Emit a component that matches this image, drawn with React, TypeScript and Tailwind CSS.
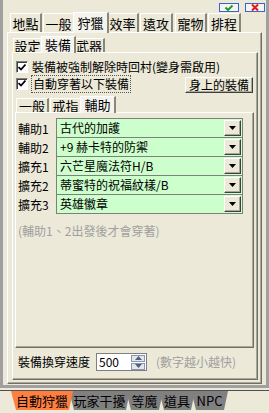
import React from 'react';

const font = "font-['Noto_Sans_CJK_TC','Noto_Sans_CJK_SC',sans-serif]";

const Tab = ({ label, active, w }: { label: string; active?: boolean; w: string }) => (
  <div
    className={`flex items-center justify-center border-t border-l border-white border-r-2 border-r-[#8a877a] ${w} ${
      active ? 'h-[21px] -mb-px -mx-[2px] relative z-10 bg-[#f4f3ee] pb-[2px]' : 'h-[19px] bg-[#ece9d8]'
    }`}
  >
    {label}
  </div>
);

const SubTab = ({ label, active, w }: { label: string; active?: boolean; w: string }) => (
  <div
    className={`flex items-center justify-center border-t border-l border-white border-r-2 border-r-[#8a877a] ${w} ${
      active ? 'h-[17px] -mb-px -mx-[2px] relative z-10 bg-[#f4f3ee] pb-[2px]' : 'h-[14px] bg-[#ece9d8]'
    }`}
  >
    {label}
  </div>
);

const Check = () => (
  <div className="w-[12px] h-[12px] shrink-0 bg-white border border-t-[#808080] border-l-[#808080] border-r-white border-b-white shadow-[inset_1px_1px_0_#404040] flex items-center justify-center">
    <svg width="8" height="7" viewBox="0 0 8 7">
      <path d="M0.5 3 L3 5.5 L7.5 0.5" stroke="#000" strokeWidth="1.7" fill="none" />
    </svg>
  </div>
);

const Combo = ({ text }: { text: string }) => (
  <div className="flex w-[187px] h-[20px] border border-[#7f7f7f] bg-[#ccffcc]">
    <div className="flex-1 flex items-center pl-[3px] whitespace-nowrap">{text}</div>
    <div className="w-[17px] m-[1px] bg-[#ece9d8] border border-t-white border-l-white border-r-[#404040] border-b-[#404040] shadow-[inset_-1px_-1px_0_#aca899] flex items-center justify-center">
      <svg width="7" height="4" viewBox="0 0 7 4">
        <path d="M0 0 H7 L3.5 4 Z" fill="#000" />
      </svg>
    </div>
  </div>
);

const rows = [
  ['輔助1', '古代的加護'],
  ['輔助2', '+9 赫卡特的防禦'],
  ['擴充1', '六芒星魔法符H/B'],
  ['擴充2', '蒂蜜特的祝福紋樣/B'],
  ['擴充3', '英雄徽章'],
];

const bottomTabs = [
  { label: '自動狩獵', w: 'w-[62px]', active: true },
  { label: '玩家干擾', w: 'w-[61px]' },
  { label: '等魔', w: 'w-[37px]' },
  { label: '道具', w: 'w-[36px]' },
  { label: 'NPC', w: 'w-[37px]' },
];

export default function App() {
  return (
    <div className={`w-[269px] h-[413px] bg-[#ece9d8] overflow-hidden text-[12px] leading-none text-black ${font}`}>
      <div className="h-[388px] border-x-[3px] border-b-[3px] border-[#a0a0a0] flex flex-col">
        {/* title buttons */}
        <div className="h-[11px] flex justify-end gap-[6px] pr-[1px] pt-[3px]">
          <div className="w-[20px] h-[9px] border border-[#3c64c8] bg-[#f4f4f4] flex items-center justify-center">
            <svg width="8" height="6" viewBox="0 0 8 6">
              <path d="M0.5 2.5 L3 5 L7.5 0.5" stroke="#1e9e1e" strokeWidth="2" fill="none" />
            </svg>
          </div>
          <div className="w-[20px] h-[9px] border border-[#3c64c8] bg-[#f4f4f4] flex items-center justify-center">
            <svg width="8" height="7" viewBox="0 0 8 7">
              <path d="M1 0.5 L7 6.5 M7 0.5 L1 6.5" stroke="#e01818" strokeWidth="2" fill="none" />
            </svg>
          </div>
        </div>
        {/* main tabs */}
        <div className="h-[21px] flex items-end pl-[7px] text-[13px]">
          <Tab label="地點" w="w-[32px] mr-[1px]" />
          <Tab label="一般" w="w-[32px]" />
          <Tab label="狩獵" w="w-[36px]" active />
          <Tab label="效率" w="w-[32px] mr-[1px]" />
          <Tab label="遠攻" w="w-[33px] mr-[2px]" />
          <Tab label="寵物" w="w-[32px] mr-[1px]" />
          <Tab label="排程" w="w-[33px]" />
        </div>
        {/* main panel */}
        <div className="flex-1 mx-[4px] mb-[1px] border-t border-l border-white border-r border-b border-r-[#716f64] border-b-[#716f64] shadow-[inset_-1px_-1px_0_#aca899] flex flex-col pl-[4px] pr-[3px] pb-[3px]">
          <div className="h-[19px] flex items-end pl-[1px] text-[13px]">
            <SubTab label="設定" w="w-[30px]" />
            <SubTab label="裝備" w="w-[35px]" active />
            <SubTab label="武器" w="w-[31px]" />
          </div>
          {/* sub panel */}
          <div className="flex-1 border-t border-l border-white border-r border-b border-r-[#716f64] border-b-[#716f64] shadow-[inset_-1px_-1px_0_#aca899] flex flex-col pl-[2px] pr-[3px]">
            <div className="mt-[7px] h-[14px] flex items-center gap-[4px] pl-[1px]">
              <Check />
              <span className="whitespace-nowrap">裝備被強制解除時回村(變身需啟用)</span>
            </div>
            <div className="h-[17px] flex items-center pl-[1px] mt-[1px]">
              <Check />
              <span className="ml-[3px] px-[1px] py-[2px] border border-dotted border-[#555] whitespace-nowrap">自動穿著以下裝備</span>
              <div className="ml-auto mt-[3px] mr-[1px] w-[68px] h-[16px] border border-t-white border-l-white border-r-[#404040] border-b-[#404040] shadow-[inset_-1px_-1px_0_#aca899] flex items-center justify-center">
                身上的裝備
              </div>
            </div>
            {/* sub-sub tabs */}
            <div className="h-[19px] mt-[1px] flex items-end pl-[1px] text-[13px]">
              <SubTab label="一般" w="w-[33px] mr-[1px]" />
              <SubTab label="戒指" w="w-[32px]" />
              <SubTab label="輔助" w="w-[36px]" active />
            </div>
            <div className="h-[236px] border-t border-l border-white border-r border-b border-r-[#716f64] border-b-[#716f64] shadow-[inset_-1px_-1px_0_#aca899] pl-[2px] pt-[5px]">
              <div className="flex flex-col">
                {rows.map(([label, val]) => (
                  <div key={label} className="flex items-center h-[20px] -mt-px first:mt-0">
                    <div className="w-[38px] pt-[2px] whitespace-nowrap">{label}</div>
                    <Combo text={val} />
                  </div>
                ))}
              </div>
              <div className="mt-[11px] text-[#a0a0a0] whitespace-nowrap">(輔助1、2出發後才會穿著)</div>
            </div>
            {/* speed row */}
            <div className="mt-[5px] flex items-center pl-[3px]">
              <span className="w-[78px] whitespace-nowrap">裝備換穿速度</span>
              <div className="w-[51px] h-[18px] bg-white border border-[#7f7f7f] flex items-center">
                <span className="flex-1 pl-[2px]">500</span>
                <div className="w-[14px] h-[15px] mr-[1px] flex flex-col gap-px">
                  <div className="flex-1 bg-[#e6e6e6] border border-[#8896b8] flex items-center justify-center">
                    <svg width="7" height="4" viewBox="0 0 7 4"><path d="M0 4 H7 L3.5 0 Z" fill="#4d6185" /></svg>
                  </div>
                  <div className="flex-1 bg-[#e6e6e6] border border-[#8896b8] flex items-center justify-center">
                    <svg width="7" height="4" viewBox="0 0 7 4"><path d="M0 0 H7 L3.5 4 Z" fill="#4d6185" /></svg>
                  </div>
                </div>
              </div>
              <span className="ml-[9px] text-[#a0a0a0] whitespace-nowrap">(數字越小越快)</span>
            </div>
          </div>
        </div>
      </div>
      {/* bottom tabs */}
      <div className="h-[21px] mt-[2px] flex pl-[11px] border-t border-[#505050]">
        {bottomTabs.map((t) => (
          <div
            key={t.label}
            className={`${t.w} h-[19px] -mr-[4px] flex items-center justify-center text-[13px] ${
              t.active ? 'bg-[#ff7f40] relative z-10' : 'bg-[#808080]'
            } [clip-path:polygon(0_0,100%_0,calc(100%-4px)_100%,5px_100%)]`}
          >
            {t.label}
          </div>
        ))}
      </div>
    </div>
  );
}
